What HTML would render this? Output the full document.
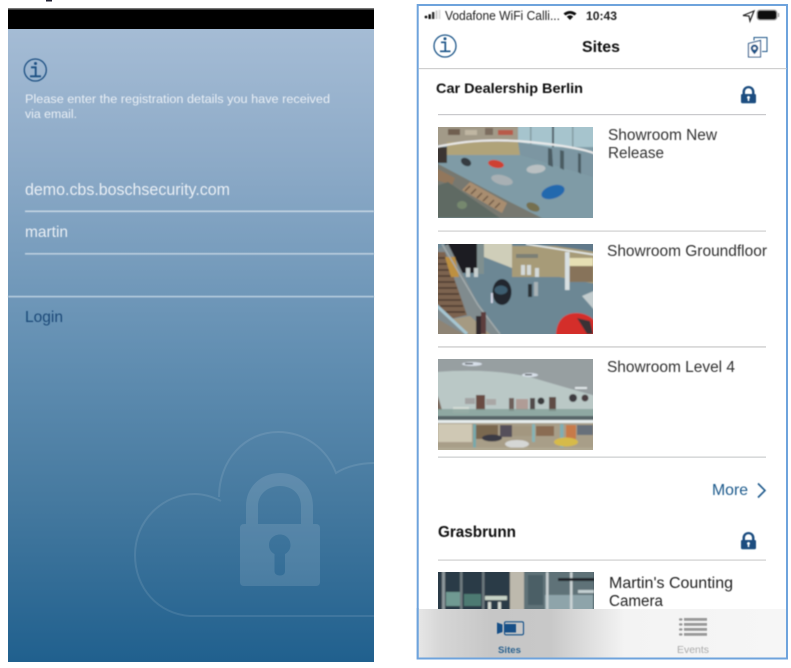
<!DOCTYPE html>
<html><head><meta charset="utf-8"><style>
html,body{margin:0;padding:0;background:#fff;width:791px;height:668px;overflow:hidden}
svg{display:block;position:absolute;left:0;top:0}
text{font-family:"Liberation Sans",sans-serif}
</style></head><body>
<svg width="791" height="668" viewBox="0 0 791 668" xmlns="http://www.w3.org/2000/svg">
<defs>
<linearGradient id="bg" x1="0" y1="0" x2="0" y2="1">
<stop offset="0" stop-color="#a5bcd5"/><stop offset=".2" stop-color="#8eabc8"/><stop offset=".5" stop-color="#6490b3"/><stop offset=".75" stop-color="#45799f"/><stop offset="1" stop-color="#20608e"/>
</linearGradient>
<linearGradient id="tab" x1="0" y1="0" x2="1" y2="0">
<stop offset="0" stop-color="#e6e6e6"/><stop offset=".06" stop-color="#d6d6d6"/><stop offset=".2" stop-color="#c6c6c6"/><stop offset=".36" stop-color="#c8c8c8"/><stop offset=".46" stop-color="#dedede"/><stop offset=".56" stop-color="#f3f3f3"/><stop offset="1" stop-color="#f6f6f6"/>
</linearGradient>
<filter id="b1" x="-5%" y="-5%" width="110%" height="110%"><feGaussianBlur stdDeviation=".8"/></filter>
<filter id="t"><feGaussianBlur stdDeviation=".4"/></filter>
<clipPath id="c1"><rect x="438" y="127" width="155" height="91"/></clipPath>
<clipPath id="c2"><rect x="438" y="244" width="155" height="90"/></clipPath>
<clipPath id="c3"><rect x="438" y="359" width="155" height="91"/></clipPath>
<clipPath id="c4"><rect x="438" y="572" width="156" height="38"/></clipPath>
<clipPath id="cl"><rect x="8" y="29" width="366" height="633"/></clipPath>
</defs>

<!-- LEFT PANEL -->
<rect x="8" y="8" width="366" height="2" fill="#777"/>
<rect x="8" y="9.5" width="366" height="19.5" fill="#000"/>
<rect x="8" y="29" width="366" height="633" fill="url(#bg)"/>
<rect x="46" y="0" width="6" height="1.5" fill="#223"/>
<g filter="url(#t)">
<circle cx="35.300" cy="70" r="11" fill="none" stroke="#1d4f82" stroke-width="1.300"/>
<path d="M31 67.300h4.700v9M30 76.300h11" fill="none" stroke="#1d4f82" stroke-width="1.800"/>
<circle cx="35.500" cy="63.500" r="1.500" fill="#1d4f82"/>
<text x="25" y="103" font-size="12.400" fill="#e9eff5" textLength="305" lengthAdjust="spacingAndGlyphs">Please enter the registration details you have received</text>
<text x="25" y="118" font-size="12.400" fill="#e9eff5" textLength="52" lengthAdjust="spacingAndGlyphs">via email.</text>
<text x="25" y="195" font-size="16.200" fill="#e9eff5" textLength="205" lengthAdjust="spacingAndGlyphs">demo.cbs.boschsecurity.com</text>
<rect x="25" y="210.500" width="349" height="1.600" fill="#c4d4e3"/>
<text x="25" y="237" font-size="15.600" fill="#e9eff5" textLength="43" lengthAdjust="spacingAndGlyphs">martin</text>
<rect x="25" y="253" width="349" height="1.600" fill="#bccfe0"/>
<rect x="8" y="295.800" width="366" height="1.600" fill="#b8cddf"/>
<text x="25" y="322" font-size="15.600" fill="#1d4a78" textLength="38" lengthAdjust="spacingAndGlyphs">Login</text>
</g>
<g clip-path="url(#cl)">
<path d="M374 616H190C158 614 135 588 135 555C135 521 162 494 195 494C205 494 213 497 221 501M219 497C219 460 245 432 278 432C305 432 327 449 336 473C347 466 360 463 376 463" fill="none" stroke="#fff" stroke-opacity=".1" stroke-width="2"/>
<path fill-rule="evenodd" fill="#fff" fill-opacity=".12" d="M246 524V506C246 487 261 473 280 473C299 473 313 487 313 506V524H316C318.500 524 320 525.500 320 528V582C320 584.500 318.500 586 316 586H244C241.500 586 240 584.500 240 582V528C240 525.500 241.500 524 244 524ZM258 524H301V506C301 494 292 486 280 486C268 486 258 494 258 506ZM280 534.500C274 534.500 269 539 269 545C269 549 271 552 274.500 554V571C274.500 574 277 575.500 280 575.500C283 575.500 285 574 285 571V554C288.500 552 290.500 549 290.500 545C290.500 539 286 534.500 280 534.500Z"/>
</g>

<!-- RIGHT PANEL -->
<rect x="417.700" y="5" width="369.300" height="653.500" fill="#fff" stroke="#6ea3dc" stroke-width="2"/>

<!-- image 1 -->
<g clip-path="url(#c1)"><g filter="url(#b1)">
<rect x="436" y="125" width="160" height="96" fill="#7f9ba6"/>
<rect x="436" y="125" width="84" height="20" fill="#a29a88"/>
<rect x="448" y="129" width="12" height="6" fill="#6f5f50"/><rect x="465" y="130" width="12" height="5" fill="#c0b6a2"/><rect x="485" y="128" width="8" height="7" fill="#7b6d5e"/><rect x="498" y="130" width="15" height="5" fill="#b85a4a"/>
<rect x="518" y="125" width="78" height="22" fill="#a6c4cd"/>
<rect x="552" y="125" width="2" height="22" fill="#4c5a60"/><rect x="530" y="125" width="1.500" height="22" fill="#82999f"/><rect x="572" y="125" width="1.500" height="22" fill="#82999f"/>
<rect x="447" y="142" width="73" height="13" fill="#b0a379"/>
<rect x="436" y="147" width="11" height="16" fill="#3a3531"/>
<path d="M518 142L596 154V178L520 155Z" fill="#7b96a2"/>
<path d="M548 148l4 1 1 18-5-2zM560 150l4 1 0 19-4-2zM578 153l3 1 0 20-3-2z" fill="#4b5c64"/>
<path d="M436 147Q480 137 530 142T596 154" fill="none" stroke="#ececec" stroke-width="2"/>
<path d="M436 163L440 165L510 202L542 218H436Z" fill="#77786f"/>
<path d="M436 168L455 178L452 185L436 180Z" fill="#92775c"/>
<path d="M462 190L470 182L507 203L502 213Z" fill="#a88d70"/>
<path d="M470 186l-5 5M476 189l-5 5M482 193l-5 5M488 196l-5 5M494 200l-5 5M500 203l-5 5" stroke="#6a5443" stroke-width="1.400"/>
<path d="M436 186L448 182L500 218H436Z" fill="#5f6a64"/>
<ellipse cx="462" cy="205" rx="5" ry="4" fill="#76886e"/>
<ellipse cx="466" cy="162" rx="5.500" ry="3.800" fill="#343a40" transform="rotate(30 466 162)"/>
<ellipse cx="496" cy="164" rx="8" ry="3.800" fill="#cf3f32" transform="rotate(12 496 164)"/>
<ellipse cx="536" cy="169" rx="9.500" ry="4.300" fill="#b9c0c2" transform="rotate(-5 536 169)"/>
<ellipse cx="502" cy="180" rx="11" ry="4.800" fill="#a8b0b4" transform="rotate(14 502 180)"/>
<ellipse cx="553" cy="192" rx="12" ry="6.500" fill="#2269ae" transform="rotate(-18 553 192)"/>
<ellipse cx="533" cy="207" rx="7" ry="4" fill="#757050" transform="rotate(25 533 207)"/>
</g></g>

<!-- image 2 -->
<g clip-path="url(#c2)"><g filter="url(#b1)">
<rect x="436" y="242" width="160" height="94" fill="#6c8794"/>
<rect x="445" y="242" width="33" height="31" fill="#1e1c24"/>
<rect x="477" y="242" width="7" height="32" fill="#7f8f8f"/>
<path d="M484 242H512V268L484 257Z" fill="#cfceb9"/>
<rect x="512" y="246" width="84" height="31" fill="#a79b78"/>
<path d="M512 268L596 284V270H512Z" fill="#a79b78"/>
<rect x="516" y="254" width="22" height="4" fill="#7a7f74"/>
<rect x="568" y="258" width="25" height="8" fill="#e6dfb4"/>
<rect x="568" y="266" width="25" height="16" fill="#87735a"/>
<path d="M528 242L596 252V242Z" fill="#60798a"/><path d="M526 244L596 255" stroke="#e8eeee" stroke-width="1.600"/>
<rect x="565" y="252" width="4.500" height="38" fill="#d8e0e2"/>
<rect x="466" y="268" width="4" height="9" fill="#c6cfcf"/><rect x="474" y="268" width="4" height="9" fill="#c6cfcf"/>
<rect x="521" y="265" width="4" height="10" fill="#d4dada"/><rect x="527" y="265" width="4" height="10" fill="#d4dada"/><rect x="535" y="268" width="4" height="9" fill="#d4dada"/>
<path d="M436 250L448 244L476 300L502 336H436Z" fill="#808b8e"/>
<path d="M436 252L445 252L467 315L450 319L436 307Z" fill="#7d6450"/>
<path d="M438 258h9M438 264h11M438 270h13M438 276h15M438 282h17M438 288h19M438 294h21M438 300h23M440 306h23M446 312h19" stroke="#4a392c" stroke-width="1.400"/>
<path d="M445 257h10l4 20h-8z" fill="#bd9040"/>
<path d="M442 244L478 305L500 334" fill="none" stroke="#a5aeb0" stroke-width="1.300"/>
<path d="M436 318L467 336H436Z" fill="#8e8474"/>
<path d="M452 319L470 316L492 336H470Z" fill="#a59a82"/>
<path d="M436 305L467 334" fill="none" stroke="#a6c6d2" stroke-width="3"/>
<rect x="476" y="316" width="5" height="19" fill="#33292d"/><rect x="481" y="312" width="5" height="22" fill="#5d3e3c"/>
<ellipse cx="502" cy="292" rx="9.500" ry="13" fill="#22282f"/><ellipse cx="501" cy="290" rx="6.500" ry="4.500" fill="#3d5d70"/>
<rect x="491" y="293" width="1.800" height="10" fill="#dde"/>
<rect x="528" y="284" width="4" height="13" fill="#2c3238"/><rect x="534" y="282" width="4" height="14" fill="#a8b2b6"/>
<path d="M556 336C556 320 565 313 576 313C586 313 594 318 596 324V336Z" fill="#d42f2a"/><path d="M577 318l13 3 3 13h-6z" fill="#3a3135"/>
<path d="M582 296L596 290V312Z" fill="#c2ccce"/>
</g></g>

<!-- image 3 -->
<g clip-path="url(#c3)"><g filter="url(#b1)">
<rect x="436" y="357" width="160" height="95" fill="#bac8c6"/>
<path d="M436 357H596V396Q560 386 530 377Q490 368 436 372Z" fill="#979fa1"/>
<ellipse cx="472" cy="364" rx="10" ry="2" fill="#d8e0ea"/><rect x="465" y="363" width="8" height="1.300" fill="#3a3f43"/>
<ellipse cx="530" cy="375" rx="8" ry="2" fill="#d8e0ea"/><rect x="525" y="374" width="7" height="1.300" fill="#3a3f43"/>
<rect x="575" y="387" width="12" height="2" fill="#e2e8ea"/>
<rect x="476" y="395" width="9" height="15" fill="#6b4c42"/><rect x="486" y="399" width="10" height="6" fill="#a9a7a5"/><rect x="465" y="398" width="10" height="6" fill="#a3a3a3"/>
<rect x="509" y="398" width="5" height="13" fill="#6e5f5a"/><rect x="516" y="399" width="12" height="11" fill="#b09c96"/>
<rect x="530" y="398" width="5" height="12" fill="#514a48"/><circle cx="541" cy="401" r="3.500" fill="#3b3b3d"/>
<rect x="549" y="397" width="7" height="14" fill="#5f4b45"/><circle cx="573" cy="398" r="4" fill="#3d3a40"/><circle cx="585" cy="398" r="3.500" fill="#4a3c40"/>
<path d="M438 396l4 14h-6z" fill="#7c6a5e"/>
<rect x="453" y="407" width="16" height="6" fill="#d4dcd6"/>
<rect x="436" y="409" width="160" height="8" fill="#84a098" opacity=".8"/>
<rect x="436" y="416" width="160" height="4" fill="#566567"/>
<rect x="436" y="420" width="160" height="3.500" fill="#e6eded"/>
<rect x="436" y="423" width="160" height="29" fill="#a89e88"/>
<rect x="438" y="424" width="34" height="18" fill="#cfc8b4"/>
<rect x="476" y="425" width="22" height="14" fill="#7a6850"/><rect x="500" y="425" width="12" height="12" fill="#55505a"/>
<rect x="512" y="426" width="20" height="10" fill="#a39780"/><rect x="536" y="426" width="18" height="10" fill="#8a6c52"/>
<rect x="566" y="425" width="10" height="14" fill="#c77a4a"/><rect x="577" y="425" width="16" height="10" fill="#67707a"/>
<rect x="473" y="424" width="3" height="28" fill="#78a8aa"/><rect x="532" y="424" width="3" height="18" fill="#86b4b6"/><rect x="560" y="424" width="3.500" height="28" fill="#80aeb2"/>
<ellipse cx="517" cy="444" rx="12" ry="4" fill="#d5d7d5"/>
<ellipse cx="566" cy="442" rx="12" ry="4.500" fill="#d6ba4a"/>
<ellipse cx="492" cy="438" rx="10" ry="3.500" fill="#3a3b45"/>
<rect x="436" y="447.500" width="160" height="4" fill="#b0a892"/>
</g></g>

<!-- image 4 -->
<g clip-path="url(#c4)"><g filter="url(#b1)">
<rect x="436" y="570" width="160" height="42" fill="#2a3a46"/>
<rect x="442" y="570" width="3" height="42" fill="#8c969a"/><rect x="460" y="570" width="2.500" height="42" fill="#707c80"/><rect x="482" y="570" width="2.500" height="42" fill="#6b777b"/>
<rect x="446" y="592" width="14" height="14" fill="#6f9a92"/><rect x="464" y="594" width="17" height="12" fill="#4e7a72"/>
<rect x="485" y="596" width="22" height="4" fill="#c8d4c8"/><rect x="488" y="602" width="3" height="8" fill="#d6dcd4"/><rect x="498" y="602" width="3" height="8" fill="#d6dcd4"/>
<rect x="510" y="570" width="14" height="42" fill="#bdb9ad"/>
<rect x="524" y="570" width="70" height="42" fill="#5f7278"/>
<rect x="528" y="575" width="15" height="30" fill="#4b5f66"/>
<rect x="545" y="595" width="48" height="15" fill="#8ea4aa"/><rect x="546" y="572" width="2.500" height="38" fill="#c8d0d2"/><rect x="570" y="572" width="2.500" height="38" fill="#ccd4d6"/>
<rect x="558" y="578" width="36" height="3" fill="#1f2328"/>
<rect x="578" y="590" width="16" height="3" fill="#c4d0d2"/>
</g></g>

<!-- Separators -->
<rect x="418.500" y="68" width="368" height="1.200" fill="#cfcfcf"/>
<rect x="438" y="114" width="328" height="1.200" fill="#c9c9cc"/>
<rect x="438" y="230.500" width="328" height="1.200" fill="#cfcfcf"/>
<rect x="438" y="346" width="328" height="1.800" fill="#dadada"/>
<rect x="438" y="456.500" width="328" height="1.300" fill="#cfd1d2"/>
<rect x="438" y="559.500" width="328" height="1.200" fill="#cfcfcf"/>

<g filter="url(#t)">
<!-- status bar -->
<circle cx="426" cy="17" r="1.400" fill="#111"/><rect x="428.500" y="14.300" width="2.400" height="4.700" fill="#111"/><rect x="432" y="12" width="2.400" height="7" fill="#333"/><rect x="435.500" y="10.500" width="2" height="8.500" fill="#ccc"/><rect x="438.500" y="10" width="2" height="9" fill="#ddd"/>
<text x="445" y="20" font-size="12.500" fill="#222" textLength="115" lengthAdjust="spacingAndGlyphs">Vodafone WiFi Calli...</text>
<path d="M563.500 13.500Q570 8.500 576.500 13.500L574.500 15.500Q570 12 565.500 15.500ZM566.800 16.600Q570 14 573.200 16.600L570 20Z" fill="#111"/>
<text x="586" y="20" font-size="12.200" font-weight="bold" fill="#222" textLength="31" lengthAdjust="spacingAndGlyphs">10:43</text>
<path d="M754 11L743 15.500L749 16L750 21Z" fill="none" stroke="#222" stroke-width="1.200"/>
<rect x="757" y="10" width="20" height="10" rx="3" fill="#111" stroke="#aaa" stroke-width="1"/><rect x="778" y="13" width="1.200" height="4" fill="#999"/>
<!-- header -->
<circle cx="445" cy="46" r="11" fill="none" stroke="#1d5588" stroke-width="1.300"/>
<path d="M441 43.300h4.300v9M440 52.300h10.500" fill="none" stroke="#1d5588" stroke-width="1.700" transform="translate(0 -1)"/><circle cx="445" cy="38.800" r="1.500" fill="#1d5588"/>
<text x="582" y="52" font-size="16" font-weight="bold" fill="#111" textLength="38" lengthAdjust="spacingAndGlyphs">Sites</text>
<path d="M754 40.500V37.500H767V51.500H762" fill="none" stroke="#1d5588" stroke-width="1"/>
<path d="M748.500 43.500L760.500 40.500V57H748.500Z" fill="#fff" stroke="#1d5588" stroke-width="1.100"/>
<path d="M754.500 44.500a3.800 3.800 0 0 1 3.800 3.800c0 2.400-3.800 6-3.800 6s-3.800-3.600-3.800-6a3.800 3.800 0 0 1 3.800-3.800Z" fill="#1d5588"/><circle cx="754.500" cy="48.300" r="1.500" fill="#fff"/>
<!-- content -->
<text x="436" y="93" font-size="14" font-weight="bold" fill="#111" textLength="147" lengthAdjust="spacingAndGlyphs">Car Dealership Berlin</text>
<path fill-rule="evenodd" fill="#1d4e80" d="M742.500 94V92C742.500 88.600 745 86 748.500 86C752 86 754.500 88.600 754.500 92V94H754.700C755.600 94 756 94.500 756 95.400V101.800C756 102.800 755.500 103.300 754.500 103.300H742.500C741.500 103.300 741 102.800 741 101.800V95.400C741 94.500 741.400 94 742.300 94ZM745 94H752V92C752 89.800 750.500 88.300 748.500 88.300C746.500 88.300 745 89.800 745 92ZM748.500 96A1.500 1.500 0 0 0 747.700 98.800V101H749.300V98.800A1.500 1.500 0 0 0 748.500 96Z"/>
<text x="608" y="140" font-size="15.400" fill="#333" textLength="109" lengthAdjust="spacingAndGlyphs">Showroom New</text>
<text x="608" y="158" font-size="15.400" fill="#333" textLength="56" lengthAdjust="spacingAndGlyphs">Release</text>
<text x="607" y="256" font-size="15.400" fill="#333" textLength="160" lengthAdjust="spacingAndGlyphs">Showroom Groundfloor</text>
<text x="607" y="372" font-size="15.400" fill="#333" textLength="128" lengthAdjust="spacingAndGlyphs">Showroom Level 4</text>
<text x="712" y="495" font-size="15.800" fill="#1f5a8c" textLength="36" lengthAdjust="spacingAndGlyphs">More</text>
<path d="M758 483.500L765 490.500L758 497.500" fill="none" stroke="#1f5a8c" stroke-width="1.600"/>
<text x="438" y="537" font-size="15.300" font-weight="bold" fill="#111" textLength="78" lengthAdjust="spacingAndGlyphs">Grasbrunn</text>
<path fill-rule="evenodd" fill="#1d4e80" d="M742.500 540V538C742.500 534.600 745 532 748.500 532C752 532 754.500 534.600 754.500 538V540H754.700C755.600 540 756 540.500 756 541.400V547.800C756 548.800 755.500 549.300 754.500 549.300H742.500C741.500 549.300 741 548.800 741 547.800V541.400C741 540.500 741.400 540 742.300 540ZM745 540H752V538C752 535.800 750.500 534.300 748.500 534.300C746.500 534.300 745 535.800 745 538ZM748.500 542A1.500 1.500 0 0 0 747.700 544.800V547H749.300V544.800A1.500 1.500 0 0 0 748.500 542Z"/>
<text x="609" y="588" font-size="15.800" fill="#222" textLength="124" lengthAdjust="spacingAndGlyphs">Martin's Counting</text>
<text x="609" y="606" font-size="15.300" fill="#222" textLength="54" lengthAdjust="spacingAndGlyphs">Camera</text>
</g>

<!-- tab bar -->
<rect x="418.700" y="609" width="367.300" height="48.500" fill="url(#tab)"/>
<g filter="url(#t)">
<path d="M497 622.500L502.500 624.500V632L497 634Z" fill="#134f87"/>
<rect x="504.500" y="621.800" width="19" height="13" rx="1.500" fill="none" stroke="#134f87" stroke-width="1.100"/>
<rect x="505" y="624" width="11" height="8.500" fill="#134f87"/>
<text x="498" y="653" font-size="9.600" font-weight="bold" fill="#2c628f" textLength="23" lengthAdjust="spacingAndGlyphs">Sites</text>
<g fill="#999"><rect x="679" y="618.200" width="3.500" height="2.400" rx="1"/><rect x="684" y="618" width="23" height="2.800"/><rect x="679" y="623.200" width="3.500" height="2.400" rx="1"/><rect x="684" y="623" width="23" height="2.800"/><rect x="679" y="628.200" width="3.500" height="2.400" rx="1"/><rect x="684" y="628" width="23" height="2.800"/><rect x="679" y="633.200" width="3.500" height="2.400" rx="1"/><rect x="684" y="633" width="23" height="2.800"/></g>
<text x="677" y="653" font-size="10.400" fill="#aaa" textLength="32" lengthAdjust="spacingAndGlyphs">Events</text>
</g>
<path d="M417.700 608V658.500H787V608" fill="none" stroke="#6ea3dc" stroke-width="2"/>
</svg>
</body></html>
